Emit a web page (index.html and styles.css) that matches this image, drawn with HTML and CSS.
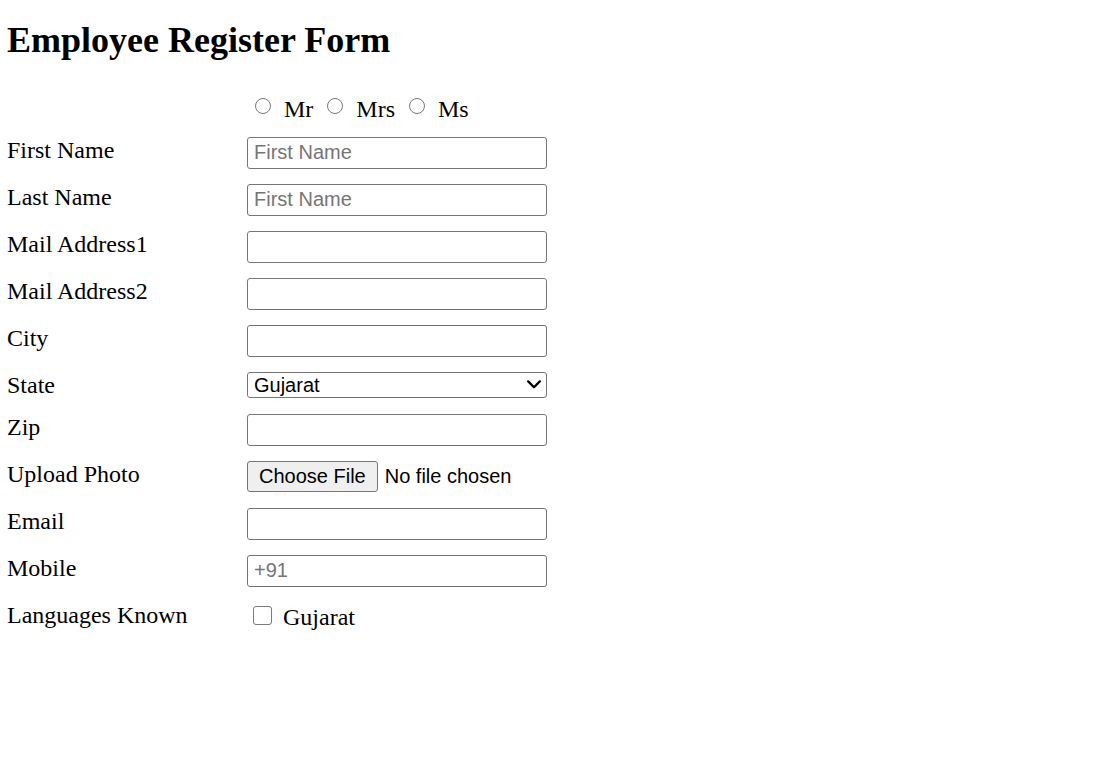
FILE: index.html
```html
<!DOCTYPE html>
<html lang="en">
<head>
<meta charset="utf-8">
<title>Employee Register Form</title>
<link rel="stylesheet" href="styles.css">
</head>
<body>
<h1 class="title">Employee Register Form</h1>
<form class="form">
  <div class="row row-radio">
    <span class="label"></span>
    <div class="options">
      <label class="opt"><input class="radio" type="radio" name="title" value="Mr"><span>Mr</span></label>
      <label class="opt"><input class="radio" type="radio" name="title" value="Mrs"><span>Mrs</span></label>
      <label class="opt"><input class="radio" type="radio" name="title" value="Ms"><span>Ms</span></label>
    </div>
  </div>
  <div class="row">
    <label class="label" for="fn">First Name</label>
    <input class="field" id="fn" type="text" placeholder="First Name">
  </div>
  <div class="row">
    <label class="label" for="ln">Last Name</label>
    <input class="field" id="ln" type="text" placeholder="First Name">
  </div>
  <div class="row">
    <label class="label" for="a1">Mail Address1</label>
    <input class="field" id="a1" type="text">
  </div>
  <div class="row">
    <label class="label" for="a2">Mail Address2</label>
    <input class="field" id="a2" type="text">
  </div>
  <div class="row">
    <label class="label" for="city">City</label>
    <input class="field" id="city" type="text">
  </div>
  <div class="row row-select">
    <label class="label" for="state">State</label>
    <div class="select-wrap">
      <select class="select" id="state">
        <option>Gujarat</option>
        <option>Maharashtra</option>
        <option>Rajasthan</option>
      </select>
      <svg class="chevron" width="14" height="9" viewBox="0 0 14 9" aria-hidden="true"><path d="M1.2 1.4 L7 7.2 L12.8 1.4" fill="none" stroke="#000" stroke-width="2.3" stroke-linecap="round" stroke-linejoin="round"/></svg>
    </div>
  </div>
  <div class="row">
    <label class="label" for="zip">Zip</label>
    <input class="field" id="zip" type="text">
  </div>
  <div class="row">
    <label class="label" for="photo">Upload Photo</label>
    <input class="file" id="photo" type="file">
  </div>
  <div class="row">
    <label class="label" for="email">Email</label>
    <input class="field" id="email" type="email">
  </div>
  <div class="row">
    <label class="label" for="mobile">Mobile</label>
    <input class="field" id="mobile" type="tel" placeholder="+91">
  </div>
  <div class="row">
    <span class="label">Languages Known</span>
    <div class="options">
      <label class="check"><input class="checkbox" type="checkbox" value="Gujarat"><span>Gujarat</span></label>
    </div>
  </div>
</form>
</body>
</html>
```
FILE: styles.css
```css
html, body {
  background: #ffffff;
}

body {
  margin: 0;
  padding: 8px 8px 0 7px;
  font-family: "Liberation Serif", "Times New Roman", serif;
  font-size: 24px;
  color: #000000;
}

.title {
  margin: 11px 0 36px 0;
  font-size: 36px;
  line-height: 42px;
  font-weight: bold;
}

.form {
  display: flex;
  flex-direction: column;
  gap: 15px;
}

.row {
  display: grid;
  grid-template-columns: 240px 300px;
  align-items: start;
  min-height: 32px;
}

.row-radio {
  min-height: 25px;
}

.row-select {
  min-height: 27px;
}

.label {
  padding-top: 1px;
  line-height: 24px;
}

.options {
  display: flex;
  align-items: flex-start;
  line-height: 25px;
}

.opt {
  display: inline-flex;
  align-items: flex-start;
  gap: 13px;
  margin-right: 14px;
}

.opt:first-child {
  margin-left: 8px;
}

.radio {
  appearance: none;
  -webkit-appearance: none;
  width: 16px;
  height: 16px;
  margin: 1px 0 0 0;
  border: 1.5px solid #7a7a7a;
  border-radius: 50%;
  background: #ffffff;
  box-sizing: border-box;
}

.check {
  display: inline-flex;
  align-items: flex-start;
  gap: 11px;
  margin-left: 6px;
  padding-top: 3px;
  line-height: 24px;
}

.checkbox {
  appearance: none;
  -webkit-appearance: none;
  width: 19px;
  height: 19px;
  margin: 1px 0 0 0;
  border: 1.5px solid #7a7a7a;
  border-radius: 3px;
  background: #ffffff;
  box-sizing: border-box;
}

.field {
  box-sizing: border-box;
  width: 300px;
  height: 32px;
  margin: 0;
  padding: 0 6px 1px 6px;
  border: 1px solid #767676;
  border-radius: 3px;
  font-family: "Liberation Sans", Arial, sans-serif;
  font-size: 20px;
  color: #000000;
  background: #ffffff;
}

.field::placeholder {
  color: #757575;
}

.select-wrap {
  position: relative;
  width: 300px;
  height: 26px;
}

.select {
  appearance: none;
  -webkit-appearance: none;
  display: block;
  box-sizing: border-box;
  width: 300px;
  height: 26px;
  margin: 0;
  padding: 0 30px 0 6px;
  border: 1px solid #767676;
  border-radius: 3px;
  font-family: "Liberation Sans", Arial, sans-serif;
  font-size: 20px;
  line-height: 24px;
  color: #000000;
  background-color: #ffffff;
}

.chevron {
  position: absolute;
  top: 8px;
  right: 6px;
  pointer-events: none;
}

.file {
  width: 300px;
  height: 31px;
  margin: 0;
  padding: 0;
  font-family: "Liberation Sans", Arial, sans-serif;
  font-size: 20px;
  color: #000000;
}

.file::file-selector-button {
  height: 31px;
  margin: 0 7px 0 0;
  padding: 0 11px;
  border: 1px solid #767676;
  border-radius: 3px;
  background: #efefef;
  font-family: "Liberation Sans", Arial, sans-serif;
  font-size: 20px;
  color: #000000;
}
```
